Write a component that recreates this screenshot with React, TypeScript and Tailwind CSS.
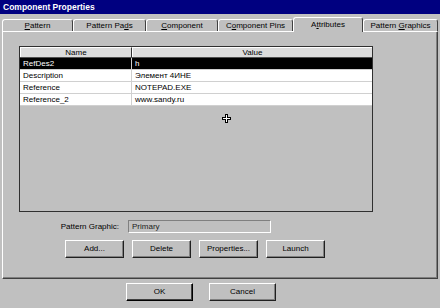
import React from 'react';

interface Attr {
  name: string;
  value: string;
}

const attrs: Attr[] = [
  { name: 'RefDes2', value: 'h' },
  { name: 'Description', value: 'Элемент 4ИНЕ' },
  { name: 'Reference', value: 'NOTEPAD.EXE' },
  { name: 'Reference_2', value: 'www.sandy.ru' },
];

const tabs = [
  { pre: '', key: 'P', post: 'attern', w: 'w-[71px]' },
  { pre: 'Pattern Pa', key: 'd', post: 's', w: 'w-[73px]' },
  { pre: '', key: 'C', post: 'omponent', w: 'w-[72px]' },
  { pre: 'C', key: 'o', post: 'mponent Pins', w: 'w-[75px]' },
  { pre: 'A', key: 't', post: 'tributes', w: 'w-[70px]', active: true },
  { pre: 'Pattern ', key: 'G', post: 'raphics', w: 'w-[75px]' },
];

const Btn: React.FC<{ label: string; w: string; def?: boolean }> = ({ label, w, def }) => (
  <button
    className={`${w} h-[18px] bg-[#c0c0c0] text-[8px] text-black border border-t-white border-l-white ${
      def ? 'border-r-black border-b-black shadow-[inset_-1px_-1px_#404040]' : 'border-r-[#202020] border-b-[#202020] shadow-[inset_-1px_-1px_#808080]'
    }`}
  >
    {label}
  </button>
);

export default function App() {
  return (
    <div className="w-[440px] h-[308px] bg-[#c0c0c0] flex flex-col overflow-hidden relative" style={{ fontFamily: '"Liberation Sans", Arial, sans-serif' }}>
      {/* Title bar */}
      <div className="h-[14px] bg-[#000080] text-white font-bold text-[8.5px] flex items-center pl-[3px]">
        Component Properties
      </div>

      {/* Tabs */}
      <div className="mt-[3px] h-[14px] flex items-end pl-[2px]">
        {tabs.map((t, i) => (
          <div
            key={i}
            className={`${t.w} rounded-t-[3px] border-t border-l border-r border-t-white border-l-white border-r-[#404040] flex items-center justify-center text-[8px] text-black ${
              t.active ? 'h-[15px] -mb-px bg-[#c0c0c0] relative z-10' : 'h-[12px]'
            }`}
          >
            <span>
              {t.pre}
              <span className="underline">{t.key}</span>
              {t.post}
            </span>
          </div>
        ))}
      </div>

      {/* Panel */}
      <div className="mx-[2px] h-[248px] border border-t-white border-l-white border-r-[#404040] border-b-[#404040] shadow-[inset_-1px_-1px_#808080] pl-[16px] pt-[14px] flex flex-col">
        {/* Table */}
        <div className="w-[354px] h-[166px] border border-[#303030] bg-[#c0c0c0] flex flex-col">
          <div className="flex h-[11px] text-[8px] text-black border-b border-[#505050]">
            <div className="w-[112px] bg-[#dcdcdc] border-t border-l border-white border-r border-r-[#303030] flex items-center justify-center">Name</div>
            <div className="flex-1 bg-[#dcdcdc] border-t border-l border-white flex items-center justify-center">Value</div>
          </div>
          {attrs.map((a, i) => (
            <div
              key={i}
              className={`flex h-[12px] text-[8px] border-b border-[#d0d0d0] ${i === 0 ? 'bg-black text-white' : 'bg-white text-black'}`}
            >
              <div className="w-[112px] pl-[3px] flex items-center border-r border-[#d0d0d0]">{a.name}</div>
              <div className="flex-1 pl-[3px] flex items-center">{a.value}</div>
            </div>
          ))}
        </div>

        {/* Pattern graphic */}
        <div className="flex items-center mt-[8px] ml-[30px]">
          <span className="text-[8px] text-black w-[70px] shrink-0 whitespace-nowrap text-right">Pattern Graphic:</span>
          <div className="ml-[9px] w-[143px] h-[13px] border border-t-[#808080] border-l-[#808080] border-r-white border-b-white text-[8px] text-[#202020] pl-[3px] flex items-center">
            Primary
          </div>
        </div>

        {/* Action buttons */}
        <div className="flex gap-[8px] mt-[7px] ml-[46px]">
          <Btn label="Add..." w="w-[59px]" />
          <Btn label="Delete" w="w-[59px]" />
          <Btn label="Properties..." w="w-[59px]" />
          <Btn label="Launch" w="w-[59px]" />
        </div>
      </div>

      {/* Footer */}
      <div className="flex gap-[16px] pl-[126px] pt-[4px]">
        <Btn label="OK" w="w-[67px]" def />
        <Btn label="Cancel" w="w-[67px]" />
      </div>

      {/* mouse cursor */}
      <svg className="absolute left-[222px] top-[114px]" width="9" height="9" viewBox="0 0 9 9">
        <path d="M3 0h3v3h3v3h-3v3h-3v-3h-3v-3h3z" fill="#000" />
        <path d="M4 1h1v3h3v1h-3v3h-1v-3h-3v-1h3z" fill="#fff" />
      </svg>
    </div>
  );
}
